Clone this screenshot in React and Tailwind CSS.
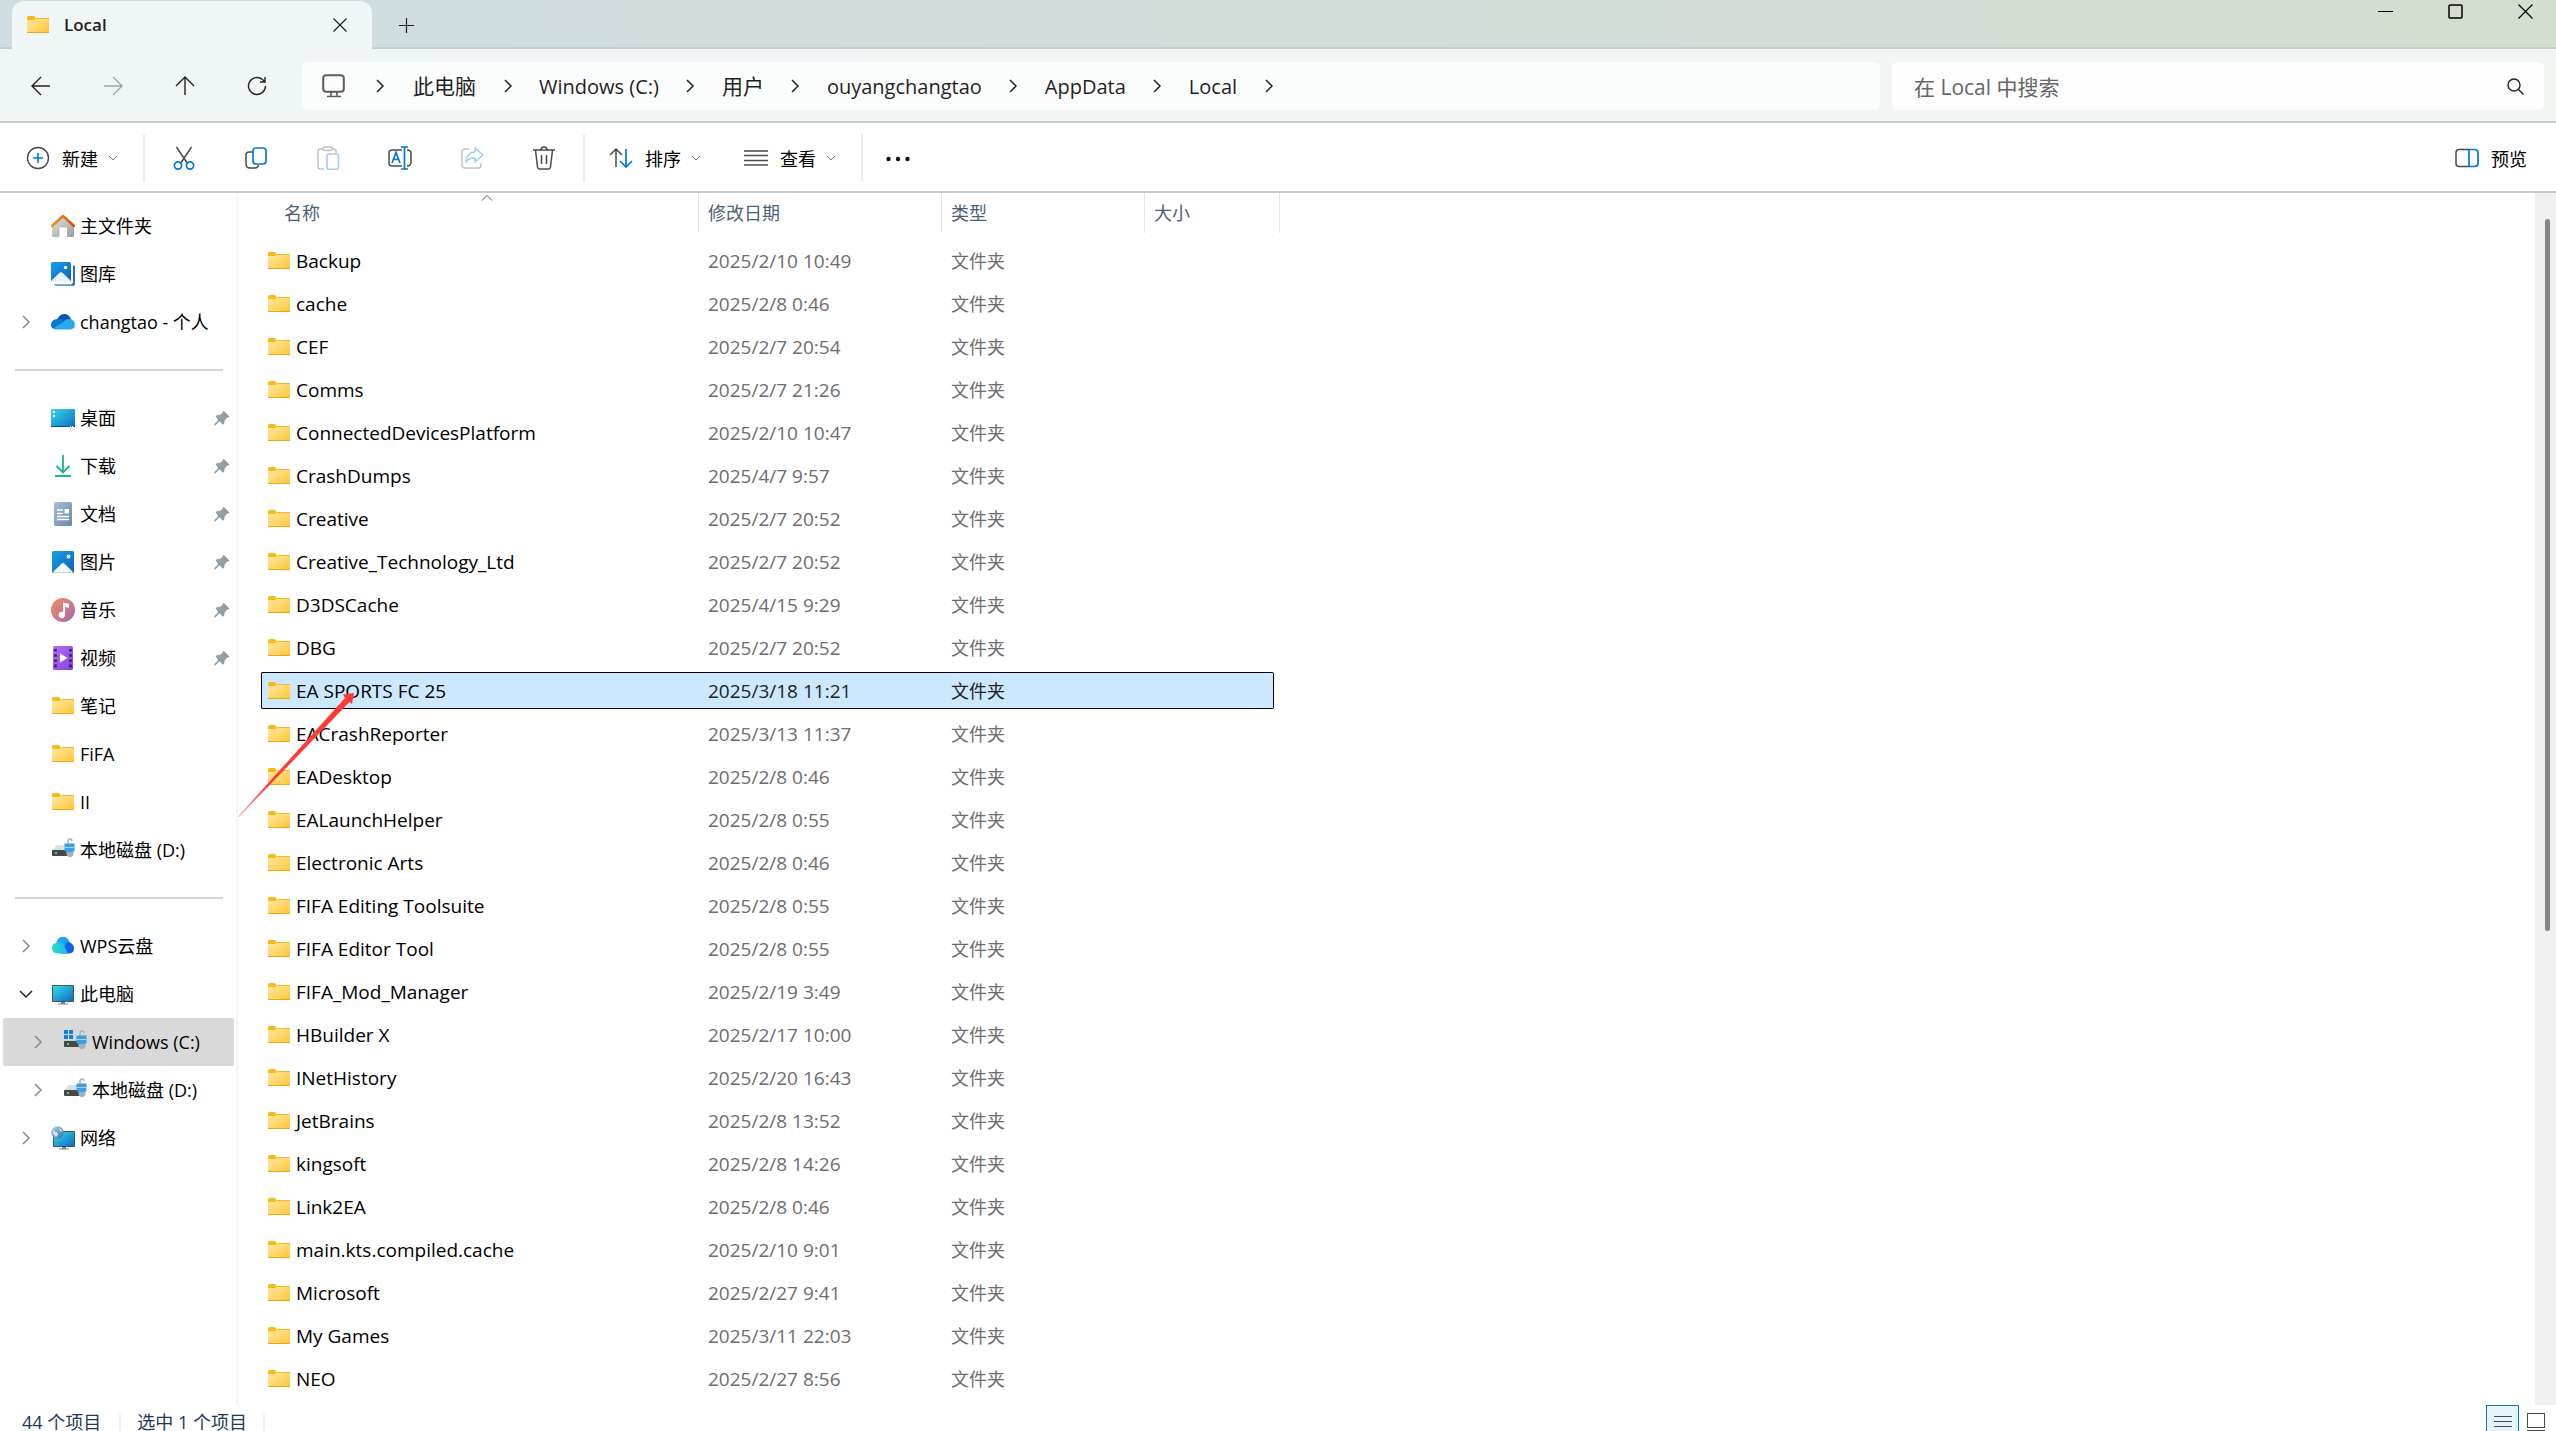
import React, { useState } from 'react';
import clsx from 'clsx';

const folders = [
  { name: 'Backup', date: '2025/2/10 10:49' },
  { name: 'cache', date: '2025/2/8 0:46' },
  { name: 'CEF', date: '2025/2/7 20:54' },
  { name: 'Comms', date: '2025/2/7 21:26' },
  { name: 'ConnectedDevicesPlatform', date: '2025/2/10 10:47' },
  { name: 'CrashDumps', date: '2025/4/7 9:57' },
  { name: 'Creative', date: '2025/2/7 20:52' },
  { name: 'Creative_Technology_Ltd', date: '2025/2/7 20:52' },
  { name: 'D3DSCache', date: '2025/4/15 9:29' },
  { name: 'DBG', date: '2025/2/7 20:52' },
  { name: 'EA SPORTS FC 25', date: '2025/3/18 11:21' },
  { name: 'EACrashReporter', date: '2025/3/13 11:37' },
  { name: 'EADesktop', date: '2025/2/8 0:46' },
  { name: 'EALaunchHelper', date: '2025/2/8 0:55' },
  { name: 'Electronic Arts', date: '2025/2/8 0:46' },
  { name: 'FIFA Editing Toolsuite', date: '2025/2/8 0:55' },
  { name: 'FIFA Editor Tool', date: '2025/2/8 0:55' },
  { name: 'FIFA_Mod_Manager', date: '2025/2/19 3:49' },
  { name: 'HBuilder X', date: '2025/2/17 10:00' },
  { name: 'INetHistory', date: '2025/2/20 16:43' },
  { name: 'JetBrains', date: '2025/2/8 13:52' },
  { name: 'kingsoft', date: '2025/2/8 14:26' },
  { name: 'Link2EA', date: '2025/2/8 0:46' },
  { name: 'main.kts.compiled.cache', date: '2025/2/10 9:01' },
  { name: 'Microsoft', date: '2025/2/27 9:41' },
  { name: 'My Games', date: '2025/3/11 22:03' },
  { name: 'NEO', date: '2025/2/27 8:56' },
];

const crumbs = ['此电脑', 'Windows (C:)', '用户', 'ouyangchangtao', 'AppData', 'Local'];

// Gradients shared by the coloured icons
const Gradients = () => (
  <svg className="absolute size-0" aria-hidden="true">
    <defs>
      <linearGradient id="folder" x1="0" y1="0" x2="1" y2="1">
        <stop offset="0" stopColor="#ffe9a6" />
        <stop offset="1" stopColor="#ffc635" />
      </linearGradient>
      <linearGradient id="blue" x1="0" y1="0" x2="1" y2="1">
        <stop offset="0" stopColor="#1ba0ea" />
        <stop offset="1" stopColor="#0a62b8" />
      </linearGradient>
      <linearGradient id="screen" x1="0" y1="0" x2="1" y2="1">
        <stop offset="0" stopColor="#35dbe6" />
        <stop offset="1" stopColor="#0d6cc4" />
      </linearGradient>
      <linearGradient id="wall" x1="0" y1="0" x2="1" y2="1">
        <stop offset="0" stopColor="#e2e2e2" />
        <stop offset="1" stopColor="#9c9c9c" />
      </linearGradient>
      <linearGradient id="roof" x1="0" y1="0" x2="1" y2="0">
        <stop offset="0" stopColor="#f0931b" />
        <stop offset="1" stopColor="#d65108" />
      </linearGradient>
      <linearGradient id="paper" x1="0" y1="0" x2="1" y2="1">
        <stop offset="0" stopColor="#a9bed6" />
        <stop offset="1" stopColor="#6787ab" />
      </linearGradient>
      <linearGradient id="music" x1="0" y1="0" x2="1" y2="1">
        <stop offset="0" stopColor="#f2905a" />
        <stop offset="1" stopColor="#a765b5" />
      </linearGradient>
      <linearGradient id="video" x1="0" y1="0" x2="1" y2="1">
        <stop offset="0" stopColor="#b56df5" />
        <stop offset="1" stopColor="#8440dc" />
      </linearGradient>
      <linearGradient id="wps" x1="0" y1="0" x2="1" y2="0">
        <stop offset="0" stopColor="#2fe0b0" />
        <stop offset="1" stopColor="#18b4ff" />
      </linearGradient>
      <linearGradient id="globe" x1="0" y1="0" x2="1" y2="1">
        <stop offset="0" stopColor="#b9dcf0" />
        <stop offset="1" stopColor="#2f6c96" />
      </linearGradient>
      <linearGradient id="arrow" gradientUnits="userSpaceOnUse" x1="0" y1="126" x2="30" y2="94">
        <stop offset="0" stopColor="#ff3b36" stopOpacity="0.4" />
        <stop offset="1" stopColor="#ff3b36" />
      </linearGradient>
    </defs>
  </svg>
);

const Icon = ({ children, className = 'size-6' }) => (
  <svg viewBox="0 0 24 24" fill="none" className={clsx('shrink-0', className)} aria-hidden="true">
    {children}
  </svg>
);

const FolderIcon = () => (
  <Icon>
    <path d="M1 4.500Q1 3 2.500 3H8l1.500 2v3H1z" fill="#f9b916" />
    <path d="M1 7h7.500l1.500-2H22.500Q23 5 23 5.500V20H1z" fill="url(#folder)" />
    <path d="M10 5.500H23" stroke="#f0b62c" />
    <path d="M1 19.500H23" stroke="#e9a71c" />
  </Icon>
);

const HomeIcon = () => (
  <Icon>
    <path d="M1 13L12 3l11 10v9q0 1-1 1h-6v-9.500H8.500V23H2q-1 0-1-1z" fill="url(#wall)" />
    <path d="M1 12L12 2l11 10" stroke="url(#roof)" strokeWidth="2.500" strokeLinecap="round" strokeLinejoin="round" />
  </Icon>
);

const GalleryIcon = () => (
  <Icon>
    <path d="M22 3q2 0 2 2v17q0 2-2 2H6q-2 0-3-2h17q2 0 2-2z" fill="#2a6fbf" />
    <path d="M3 22h17q1 0 1.500 1.800H6q-2 0-3-1.800z" fill="#76a7dd" />
    <rect y="0" width="20" height="20" rx="1.500" fill="url(#blue)" />
    <path d="M0 19l8.500-8.200q1.500-1.300 3 0L20 19l-1 1.500H1z" fill="#e9f4fd" />
    <circle cx="14.500" cy="5.500" r="1.700" fill="#fff" />
  </Icon>
);

const OneDriveIcon = () => (
  <Icon>
    <path d="M6 10.500Q8 4 13 4q5.500 0 7 5.500l-6 4z" fill="#0a56ad" />
    <path d="M6 9q3-1 5.500 1l5 3L3 19q-3-1-3-4.500Q.5 9.500 6 9z" fill="#0a78d2" />
    <path d="M12 12.500q2-3.500 6-3.500 5.500 0 6 5.500 0 4.500-5 5H5q-2 0-3-1z" fill="#29a9ec" />
  </Icon>
);

const DesktopIcon = () => (
  <Icon>
    <rect y="3" width="24" height="18" rx="1" fill="url(#screen)" />
    <path d="M0 20h24v.5q0 .5-.5.5H.5q-.5 0-.5-.5z" fill="#0a4f92" />
    <path d="M2 5h2v2H2zM2 9h2v2H2zM19 20h1v1h-1zM21 20h1v1h-1z" fill="#fff" />
  </Icon>
);

const DownloadIcon = () => (
  <Icon>
    <path d="M12 1v17M5.500 12l6.500 6.500L18.500 12" stroke="#19b58f" strokeWidth="1.800" />
    <path d="M4 22h16" stroke="#19b58f" strokeWidth="2" />
  </Icon>
);

const DocumentIcon = () => (
  <Icon>
    <rect x="3" width="18" height="24" rx="1.500" fill="url(#paper)" />
    <path d="M6 8h6M6 11.500h6M6 14.500h12M6 17.500h12" stroke="#fff" strokeWidth="1.300" />
    <rect x="13.500" y="7" width="4.500" height="4.500" fill="#fff" />
  </Icon>
);

const PictureIcon = () => (
  <Icon>
    <rect x="1" y="1" width="22" height="22" rx="1.500" fill="url(#blue)" />
    <path d="M2 22l9-8.700q1-.8 2 0L22 22q-.5.8-1 .8H3q-.5 0-1-.8z" fill="#f4f9fe" />
    <circle cx="17.500" cy="6.500" r="1.900" fill="#fff" />
  </Icon>
);

const MusicIcon = () => (
  <Icon>
    <circle cx="12" cy="12" r="12" fill="url(#music)" />
    <path d="M12 4.500l6 1.200v4l-4-.8V17a3.200 3.200 0 1 1-2-3z" fill="#fff" />
  </Icon>
);

const VideoIcon = () => (
  <Icon>
    <rect x="2" width="20" height="24" rx="1.500" fill="url(#video)" />
    <path d="M4.500 3v19M19.500 3v19" stroke="#3c1a78" strokeWidth="2.600" strokeDasharray="2.600 2.600" />
    <path d="M9 7.500v9l7.500-4.500z" fill="#fff" />
  </Icon>
);

// Lock hanging on a BitLocker drive
const DriveLock = () => (
  <>
    <path d="M17 7V3.500q0-2.500 2-2.500t2 2" stroke="#a9b4bd" strokeWidth="1.500" />
    <circle cx="19" cy="15.500" r="3.500" fill="#9fb1bf" />
    <path d="M13.500 5.500h10v7q0 1.500-5 1.500t-5-1.500z" fill="#3c9ee6" />
    <path d="M13.500 9.500h10" stroke="#a8d5f7" />
  </>
);

const DriveIcon = () => (
  <Icon>
    <path d="M5.500 7H20l3 6H1z" fill="#dcdee0" />
    <path d="M1 12h19v6H2q-1 0-1-1z" fill="#474747" />
    <path d="M4 14h2v2H4z" fill="#2fe54d" />
    <DriveLock />
  </Icon>
);

const SystemDriveIcon = () => (
  <Icon>
    <path d="M1 0h4v4H1zM6 0h4v4H6zM1 5h4v4H1zM6 5h4v4H6z" fill="#0f82d8" />
    <path d="M3 10h17v2H1z" fill="#c6c9cc" />
    <path d="M1 11h19v6H2q-1 0-1-1z" fill="#474747" />
    <path d="M4 13h2v2H4z" fill="#2fe54d" />
    <DriveLock />
  </Icon>
);

const WpsIcon = () => (
  <Icon>
    <circle cx="12" cy="9.500" r="6.700" fill="#17a4ff" />
    <path d="M16 8q7 .5 7 6.500 0 5-5.500 5H10z" fill="#1160e0" />
    <path d="M7 8.500q4 0 6 3.500l4 7.500H6.500Q1 19 1 14t6-5.500z" fill="url(#wps)" />
  </Icon>
);

const ComputerIcon = () => (
  <Icon>
    <rect x="1" y="3" width="22" height="17" rx="1" fill="#47535c" />
    <rect x="2" y="4" width="20" height="15" fill="url(#screen)" />
    <path d="M10 20h4v1.500h3v1H7v-1h3z" fill="#77828a" />
  </Icon>
);

const NetworkIcon = () => (
  <Icon>
    <rect x="2" y="5" width="22" height="16" rx="1" fill="#47535c" />
    <rect x="3" y="6" width="20" height="14" fill="url(#screen)" />
    <path d="M11 21h4v1.500h3v1H8v-1h3z" fill="#77828a" />
    <circle cx="6.500" cy="6.500" r="6.300" fill="url(#globe)" />
    <path d="M2 4q2 3 4 2l1 3-2 2Q2 9 2 4zM8 2q3 1 3.500 4L9 5z" fill="#e8f6fd" fillOpacity="0.8" />
  </Icon>
);

const PinIcon = () => (
  <svg viewBox="0 0 16 16" className="size-4 shrink-0" aria-hidden="true">
    <path d="M9.500 0.500l6 6-1.500 1-1 .2-2.500 3-.3 3.300-1.500.5-3.200-3.200L.8 15.800 0 15.500l.2-1.300 4-4.500L1.700 6.500l.8-1.300 3.200-.2 3.200-2.500z" fill="#949da3" />
  </svg>
);

const Chevron = ({ open, className }) => (
  <svg viewBox="0 0 16 16" fill="none" className={clsx('size-4 shrink-0', className)} aria-hidden="true">
    <path d={open ? 'M2 5l6 6 6-6' : 'M5 2l6 6-6 6'} stroke="currentColor" strokeWidth="1.500" />
  </svg>
);

const SmallDown = () => (
  <svg viewBox="0 0 10 10" fill="none" className="size-2.5 text-[#777]" aria-hidden="true">
    <path d="M1 3l4 4 4-4" stroke="currentColor" />
  </svg>
);

const quickAccess = [
  { label: '桌面', icon: DesktopIcon, pinned: true },
  { label: '下载', icon: DownloadIcon, pinned: true },
  { label: '文档', icon: DocumentIcon, pinned: true },
  { label: '图片', icon: PictureIcon, pinned: true },
  { label: '音乐', icon: MusicIcon, pinned: true },
  { label: '视频', icon: VideoIcon, pinned: true },
  { label: '笔记', icon: FolderIcon },
  { label: 'FiFA', icon: FolderIcon },
  { label: 'II', icon: FolderIcon },
  { label: '本地磁盘 (D:)', icon: DriveIcon },
];

const NavItem = ({ label, icon: ItemIcon, pinned, arrow, open, nested, active }) => (
  <li>
    <button
      className={clsx(
        'flex h-12 w-full items-center rounded-xs pr-1 text-left whitespace-nowrap',
        nested ? 'pl-[27px]' : 'pl-[15px]',
        active ? 'bg-[#d9d9d9]' : 'hover:bg-gray-100'
      )}
    >
      <span className="mr-[17px] flex w-4 justify-center">
        {arrow && <Chevron open={open} className={open ? 'text-[#222]' : 'text-[#8a8a8a]'} />}
      </span>
      <ItemIcon />
      <span className="ml-[5px] flex-1 leading-6">{label}</span>
      {pinned && <PinIcon />}
    </button>
  </li>
);

const NavDivider = () => (
  <li className="flex h-12 items-center pr-[11px] pl-3">
    <hr className="w-full border-t-2 border-[#d5d5d5]" />
  </li>
);

const Sidebar = () => (
  <nav className="w-[238px] shrink-0 border-r-2 border-[#f5f5f5] py-[9px] pr-0.5 pl-[3px]">
    <ul>
      <NavItem label="主文件夹" icon={HomeIcon} />
      <NavItem label="图库" icon={GalleryIcon} />
      <NavItem label="changtao - 个人" icon={OneDriveIcon} arrow />
      <NavDivider />
      {quickAccess.map((item) => (
        <NavItem key={item.label} {...item} />
      ))}
      <NavDivider />
      <NavItem label="WPS云盘" icon={WpsIcon} arrow />
      <NavItem label="此电脑" icon={ComputerIcon} arrow open />
      <NavItem label="Windows (C:)" icon={SystemDriveIcon} arrow nested active />
      <NavItem label="本地磁盘 (D:)" icon={DriveIcon} arrow nested />
      <NavItem label="网络" icon={NetworkIcon} arrow />
    </ul>
  </nav>
);

const TitleBar = () => (
  <header className="flex h-[49px] border-b-2 border-[#c3d0d2] bg-linear-to-r from-[#cfdde1] via-[#d3ddda] to-[#d5ddd0]">
    <div className="z-10 mt-px ml-3 flex h-12 w-[360px] items-center rounded-t-xl bg-[#f0f5f6] pr-5 pl-3.5">
      <FolderIcon />
      <span className="ml-3.5 flex-1 text-[17px] font-semibold text-[#222]">Local</span>
      <button aria-label="关闭标签页" className="flex size-6 items-center justify-center">
        <svg viewBox="0 0 14 14" className="size-3.5" stroke="#222" strokeWidth="1.200">
          <path d="M.5.5l13 13M13.500.5l-13 13" />
        </svg>
      </button>
    </div>
    <button aria-label="新标签页" className="mt-1 ml-[22px] flex size-6 items-center justify-center self-center">
      <svg viewBox="0 0 15 15" className="size-[15px]" stroke="#222" strokeWidth="1.200">
        <path d="M7.500 0v15M0 7.500h15" />
      </svg>
    </button>
    <div className="ml-auto flex h-[23px]">
      <button aria-label="最小化" className="flex w-[62px] items-center justify-center">
        <svg viewBox="0 0 15 15" className="size-[15px]" stroke="#000">
          <path d="M0 7.500h15" />
        </svg>
      </button>
      <button aria-label="最大化" className="flex w-[78px] items-center justify-center">
        <svg viewBox="0 0 15 15" className="size-[15px]" fill="none" stroke="#000" strokeWidth="1.500">
          <rect x="1" y="1" width="13" height="13" rx="1" />
        </svg>
      </button>
      <button aria-label="关闭" className="flex w-[62px] items-center justify-center">
        <svg viewBox="0 0 15 15" className="size-[15px]" stroke="#000" strokeWidth="1.200">
          <path d="M.5.5l14 14M14.500.5l-14 14" />
        </svg>
      </button>
    </div>
  </header>
);

const NavButton = ({ label, disabled, children }) => (
  <button
    aria-label={label}
    disabled={disabled}
    className={clsx('flex h-12 w-[72px] items-center justify-center', disabled ? 'text-[#a0a5a6]' : 'text-[#222]')}
  >
    <Icon className="size-6">{children}</Icon>
  </button>
);

const AddressBar = ({ query, onQuery }) => (
  <div className="flex h-[74px] items-center border-b-2 border-[#c1cccc] bg-linear-to-r from-[#f0f5f6] to-[#f3f5f2] pt-0.5 pr-3 pl-[5px]">
    <NavButton label="后退">
      <path d="M21 12H3M12 3l-9 9 9 9" stroke="currentColor" strokeWidth="1.400" />
    </NavButton>
    <NavButton label="前进" disabled>
      <path d="M3 12h18M12 3l9 9-9 9" stroke="currentColor" strokeWidth="1.400" />
    </NavButton>
    <NavButton label="向上">
      <path d="M12 21V3M3 12l9-9 9 9" stroke="currentColor" strokeWidth="1.400" />
    </NavButton>
    <NavButton label="刷新">
      <path d="M20.500 12a8.500 8.500 0 1 1-3-6.500l2.500 2.500M20 3v5h-5" stroke="currentColor" strokeWidth="1.400" />
    </NavButton>

    <div className="ml-[9px] flex h-12 flex-1 items-center rounded-md bg-[#fbfdfc] pl-5 text-xl whitespace-nowrap text-[#1f1f1f]">
      <Icon>
        <rect x="1.200" y="1.200" width="20.600" height="16.600" rx="3" stroke="#5c5c5c" strokeWidth="2" />
        <path d="M9 18v4M15 18v4M5 22.500h14" stroke="#5c5c5c" strokeWidth="1.600" />
      </Icon>
      <span className="flex w-[67px] justify-center">
        <Chevron className="text-[#222]" />
      </span>
      {crumbs.map((crumb) => (
        <React.Fragment key={crumb}>
          <button className={clsx('pt-0.5', crumb.charCodeAt(0) > 255 && 'text-[21px]')}>{crumb}</button>
          <span className="flex w-[63px] justify-center">
            <Chevron className="text-[#222]" />
          </span>
        </React.Fragment>
      ))}
    </div>

    <div className="ml-3 flex h-12 w-[652px] items-center rounded-md bg-[#fcfdfc] pr-5 pl-[22px]">
      <input
        type="text"
        aria-label="搜索"
        placeholder="在 Local 中搜索"
        className="min-w-0 flex-1 bg-transparent pt-0.5 text-[21px] outline-none placeholder:text-[#666]"
        value={query}
        onChange={(e) => onQuery(e.target.value)}
      />
      <svg viewBox="0 0 17 17" fill="none" className="size-[17px]" stroke="#222" strokeWidth="1.400">
        <circle cx="7" cy="7" r="6" />
        <path d="M11.500 11.500l5 5" />
      </svg>
    </div>
  </div>
);

const ToolButton = ({ label, disabled, children }) => (
  <button aria-label={label} disabled={disabled} className="flex h-12 w-[72px] items-center justify-center">
    <Icon>{children}</Icon>
  </button>
);

const ToolDivider = () => <span className="h-12 w-0.5 bg-[#ececec]" />;

const Toolbar = () => (
  <div className="flex h-[70px] items-center border-b-2 border-[#c1cccc] bg-white pt-0.5 pr-[29px] pl-[26px]">
    <button className="mr-[25px] flex items-center">
      <Icon>
        <circle cx="12" cy="12" r="10.500" stroke="#4a4a4a" strokeWidth="1.400" />
        <path d="M12 7v10M7 12h10" stroke="#0078d4" strokeWidth="1.600" />
      </Icon>
      <span className="mr-2.5 ml-3 pt-0.5">新建</span>
      <SmallDown />
    </button>
    <ToolDivider />
    <div className="mr-[3px] ml-[3px] flex">
      <ToolButton label="剪切">
        <path d="M4.500 1l11 16.500M19.500 1l-11 16.500" stroke="#4a4a4a" strokeWidth="1.500" />
        <circle cx="6" cy="19.500" r="3.600" stroke="#0078d4" strokeWidth="1.700" />
        <circle cx="18" cy="19.500" r="3.600" stroke="#0078d4" strokeWidth="1.700" />
      </ToolButton>
      <ToolButton label="复制">
        <path d="M8 6H5Q2 6 2 9v9q0 4 4 4h5q3 0 3.500-3" stroke="#4a4a4a" strokeWidth="1.500" />
        <rect x="9" y="2" width="13" height="16" rx="3" stroke="#0078d4" strokeWidth="1.700" />
      </ToolButton>
      <ToolButton label="粘贴" disabled>
        <path d="M8 3H4.500Q2 3 2 5.500v15Q2 23 4.500 23H8M16 3h1.500Q20 3 20 5.500V7" stroke="#c2c2c2" strokeWidth="1.500" />
        <rect x="7" y="1" width="9" height="3.500" rx="1.700" stroke="#c2c2c2" strokeWidth="1.500" />
        <rect x="11" y="8" width="11.500" height="15.200" rx="2" stroke="#a3cdf0" strokeWidth="1.600" />
      </ToolButton>
      <ToolButton label="重命名">
        <path d="M14 4H4Q1 4 1 7v10q0 3 3 3h10M19 4q4 0 4 4v8q0 4-4 4" stroke="#4a4a4a" strokeWidth="1.500" />
        <path d="M4 17l4-10.500L12 17M5.300 13.500h5.400M16.500 1v22M13 1h7M13 23h7" stroke="#0078d4" strokeWidth="1.700" />
      </ToolButton>
      <ToolButton label="共享" disabled>
        <path d="M9 3H5Q2 3 2 6v13q0 3 3 3h13q3 0 3-3v-2" stroke="#c2c2c2" strokeWidth="1.500" />
        <path d="M15 2l8 7-8 7v-4q-6-.5-9 4Q6.500 6.500 15 6z" stroke="#a3cdf0" strokeWidth="1.500" strokeLinejoin="round" />
      </ToolButton>
      <ToolButton label="删除">
        <path d="M1 4h22M3.500 4l2 17q.3 2 2 2h9q1.700 0 2-2l2-17M9 4q0-3 3-3t3 3M9.500 9v9M14.500 9v9" stroke="#4a4a4a" strokeWidth="1.500" />
      </ToolButton>
    </div>
    <ToolDivider />
    <button className="ml-6 flex items-center">
      <Icon>
        <path d="M7 21V3M1 9l6-6 6 6" stroke="#4a4a4a" strokeWidth="1.500" />
        <path d="M17 3v18M11 15l6 6 6-6" stroke="#0078d4" strokeWidth="1.700" />
      </Icon>
      <span className="mr-2.5 ml-3 pt-0.5">排序</span>
      <SmallDown />
    </button>
    <button className="mr-[25px] ml-[43px] flex items-center">
      <Icon>
        <path d="M0 5h24M0 9.500h24M0 14.500h24M0 19h24" stroke="#4a4a4a" strokeWidth="1.300" />
      </Icon>
      <span className="mr-2.5 ml-3 pt-0.5">查看</span>
      <SmallDown />
    </button>
    <ToolDivider />
    <button aria-label="更多" className="ml-[23px]">
      <Icon>
        <circle cx="2.500" cy="13" r="2.200" fill="#111" />
        <circle cx="12" cy="13" r="2.200" fill="#111" />
        <circle cx="21.500" cy="13" r="2.200" fill="#111" />
      </Icon>
    </button>
    <button className="ml-auto flex items-center gap-3">
      <Icon>
        <path d="M14 3.500H4Q1 3.500 1 6.500v11q0 3 3 3h10" stroke="#4a4a4a" strokeWidth="1.500" />
        <path d="M14 3.500h5.500q3.500 0 3.500 3v11q0 3-3.500 3H14z" stroke="#0078d4" strokeWidth="1.700" />
      </Icon>
      <span className="pt-0.5">预览</span>
    </button>
  </div>
);

const Cell = ({ selected, edge, children }) => (
  <td className="p-0 py-[3px]">
    <div
      className={clsx(
        'flex h-[37px] items-center',
        selected && 'border-y border-black bg-[#cce8ff]',
        selected && edge === 'left' && 'rounded-l-xs border-l',
        selected && edge === 'right' && 'rounded-r-xs border-r'
      )}
    >
      {children}
    </div>
  </td>
);

const FileTable = ({ selected, onSelect }) => (
  <table className="ml-[23px] w-[1019px] table-fixed border-separate border-spacing-0 whitespace-nowrap">
    <colgroup>
      <col className="w-[438px]" />
      <col className="w-[243px]" />
      <col className="w-[203px]" />
      <col className="w-[129px]" />
      <col className="w-1.5" />
    </colgroup>
    <thead className="text-left text-[#4c607a]">
      <tr className="h-10">
        <th className="relative border-r border-[#e5e5e5] p-0 pl-[23px] font-normal">
          名称
          <svg viewBox="0 0 12 7" fill="none" className="absolute top-px left-[220px] h-[7px] w-3" stroke="#555">
            <path d="M1 6.500l5-5 5 5" />
          </svg>
        </th>
        <th className="border-r border-[#e5e5e5] p-0 pl-[9px] font-normal">修改日期</th>
        <th className="border-r border-[#e5e5e5] p-0 pl-[9px] font-normal">类型</th>
        <th colSpan={2} className="border-r border-[#e5e5e5] p-0 pl-[9px] font-normal">大小</th>
      </tr>
      <tr className="h-1.5" />
    </thead>
    <tbody>
      {folders.map(({ name, date }) => {
        const isSelected = name === selected;
        return (
          <tr key={name} onClick={() => onSelect(name)} className={isSelected ? 'text-[#222]' : 'text-[#6d6d6d]'}>
            <Cell selected={isSelected} edge="left">
              <span className={clsx('flex items-center gap-[5px] text-[19px] text-black', isSelected ? 'pl-[5px]' : 'pl-1.5')}>
                <FolderIcon />
                {name}
              </span>
            </Cell>
            <Cell selected={isSelected}>
              <span className="pl-[9px] text-[19px]">{date}</span>
            </Cell>
            <Cell selected={isSelected}>
              <span className="pl-[9px]">文件夹</span>
            </Cell>
            <Cell selected={isSelected} edge="right" />
          </tr>
        );
      })}
    </tbody>
  </table>
);

const StatusBar = () => (
  <footer className="flex h-[26px] shrink-0 overflow-hidden bg-white text-[#1e395b]">
    <div className="flex h-[34px] flex-1 items-center">
      <span className="ml-[22px] pr-[18px]">44 个项目</span>
      <span className="h-[18px] w-0.5 bg-[#f2f2f2]" />
      <span className="px-4">选中 1 个项目</span>
      <span className="h-[18px] w-0.5 bg-[#f2f2f2]" />
    </div>
    <button aria-label="详细信息" className="flex h-9 w-[33px] justify-center border border-[#0078d4] bg-[#e5f3fb] pt-2">
      <svg viewBox="0 0 18 18" className="size-[18px]" stroke="#4a4a4a">
        <path d="M0 2.500h18M0 7.500h18M0 12.500h18M0 17.500h18" />
      </svg>
    </button>
    <button aria-label="大缩略图" className="mr-[11px] ml-2 flex h-9 pt-2">
      <svg viewBox="0 0 18 22" fill="none" className="h-[22px] w-[18px]" stroke="#4a4a4a">
        <rect x=".5" y=".5" width="17" height="14" />
        <path d="M0 17.500h18" />
      </svg>
    </button>
  </footer>
);

const App = () => {
  const [query, setQuery] = useState('');
  const [selected, setSelected] = useState('EA SPORTS FC 25');

  return (
    <div className="flex h-screen flex-col overflow-hidden bg-white font-['Open_Sans','Noto_Sans_CJK_SC',sans-serif] text-lg leading-6 text-black">
      <Gradients />
      <TitleBar />
      <AddressBar query={query} onQuery={setQuery} />
      <Toolbar />

      <div className="flex min-h-0 flex-1">
        <Sidebar />
        <main className="relative min-w-0 flex-1 overflow-hidden">
          <FileTable selected={selected} onSelect={setSelected} />
          {/* Annotation arrow pointing at the game folder */}
          <svg
            viewBox="0 0 118 127"
            className="pointer-events-none absolute top-[498px] left-0 h-[127px] w-[118px]"
            aria-hidden="true"
          >
            <path d="M0 125.500L107 7l-2-3.500L116 2l-2 11-2.500-2L.5 126.500z" fill="url(#arrow)" />
          </svg>
        </main>
        {/* Scrollbar */}
        <div className="flex w-[21px] justify-center bg-[#f0f0f0] pt-[26px] pl-1">
          <div className="h-3/5 w-[5px] rounded-full bg-[#858585]" />
        </div>
      </div>

      <StatusBar />
    </div>
  );
};

export default App;
